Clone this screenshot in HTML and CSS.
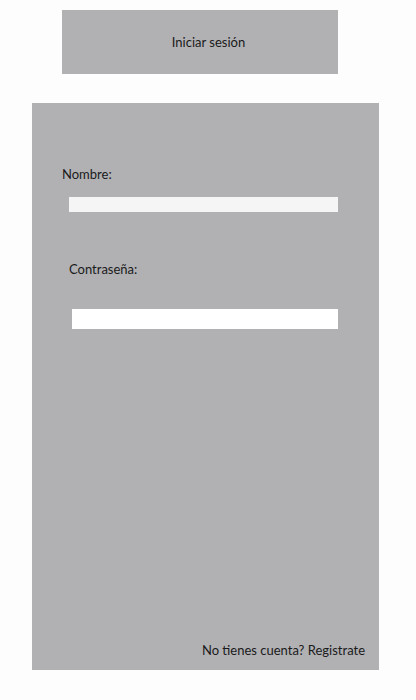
FILE: index.html
```html
<!DOCTYPE html>
<html lang="es">
<head>
<meta charset="utf-8">
<link rel="stylesheet" href="styles.css">
</head>
<body>
<div class="page">
  <div class="title-box">Iniciar sesión</div>
  <div class="panel">
    <div class="field field-name">
      <label class="label">Nombre:</label>
      <div class="input input-name"></div>
    </div>
    <div class="field field-pass">
      <label class="label">Contraseña:</label>
      <div class="input input-pass"></div>
    </div>
    <div class="spacer"></div>
    <div class="footer">No tienes cuenta? Registrate</div>
  </div>
</div>
</body>
</html>
```
FILE: styles.css
```css
html, body {
  margin: 0;
  padding: 0;
  background: #fdfdfd;
}
body {
  font-family: Lato, "Noto Sans", sans-serif;
  font-size: 13px;
  color: #1a1a1a;
}
.page {
  display: flex;
  flex-direction: column;
  padding-top: 10px;
}
.title-box {
  margin-left: 62px;
  width: 276px;
  height: 64px;
  box-sizing: border-box;
  padding-left: 17px;
  background: #b1b1b4;
  display: flex;
  align-items: center;
  justify-content: center;
}
.panel {
  margin-top: 29px;
  margin-left: 32px;
  width: 347px;
  height: 567px;
  background: #b1b1b4;
  display: flex;
  flex-direction: column;
  box-sizing: border-box;
  padding-top: 63px;
}
.label {
  display: block;
  line-height: 16px;
}
.field-name .label {
  margin-left: 30px;
}
.input-name {
  margin-top: 15px;
  margin-left: 37px;
  width: 269px;
  height: 15px;
  background: #f5f5f6;
}
.field-pass {
  margin-top: 49px;
}
.field-pass .label {
  margin-left: 37px;
}
.input-pass {
  margin-top: 32px;
  margin-left: 40px;
  width: 266px;
  height: 20px;
  background: #ffffff;
}
.spacer {
  flex: 1;
}
.footer {
  align-self: flex-end;
  margin-right: 14px;
  line-height: 16px;
  margin-bottom: 12px;
}
```
